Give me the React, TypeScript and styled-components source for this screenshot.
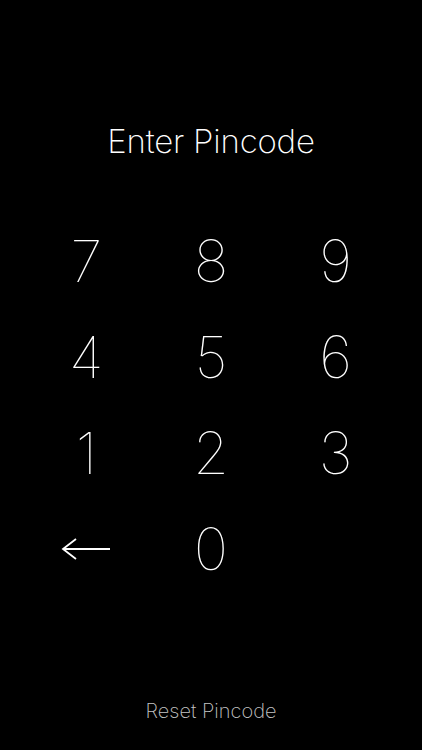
import React from 'react'
import styled, { createGlobalStyle } from 'styled-components'

const GlobalStyle = createGlobalStyle`
  html, body {
    margin: 0;
    padding: 0;
    background: #000;
  }
  body {
    font-family: Inter, "Open Sans", "Liberation Sans", sans-serif;
  }
`

const keys = ['7', '8', '9', '4', '5', '6', '1', '2', '3', 'back', '0', '']

const Screen = styled.div`
  width: 422px;
  height: 750px;
  background: #000;
  display: flex;
  flex-direction: column;
  align-items: center;
  box-sizing: border-box;
  padding-top: 117px;
`

const Title = styled.h1`
  margin: 0;
  color: #fff;
  font-size: 33px;
  font-weight: 200;
  line-height: 48px;
  letter-spacing: -0.2px;
`

const Pad = styled.div`
  margin-top: 48px;
  width: 374px;
  display: grid;
  grid-template-columns: repeat(3, 1fr);
  grid-auto-rows: 96px;
`

const Key = styled.button`
  background: none;
  border: none;
  padding: 0;
  color: #fff;
  font-family: inherit;
  font-size: 58px;
  font-weight: 100;
  display: flex;
  align-items: center;
  justify-content: center;
  cursor: pointer;
`

const Reset = styled.button`
  margin-top: auto;
  margin-bottom: 25px;
  background: none;
  border: none;
  padding: 0;
  color: #c4c4c4;
  font-family: inherit;
  font-size: 20px;
  font-weight: 200;
  line-height: 28px;
  cursor: pointer;
`

const BackArrow = () => (
  <svg width="50" height="26" viewBox="0 0 50 26" fill="none" stroke="#fff" strokeWidth="1.8">
    <path d="M49 13H2M15 3L2 13L15 23" />
  </svg>
)

export default function App() {
  return (
    <>
      <GlobalStyle />
      <Screen>
        <Title>Enter Pincode</Title>
        <Pad>
          {keys.map((k, i) => (
            <Key key={i}>{k === 'back' ? <BackArrow /> : k}</Key>
          ))}
        </Pad>
        <Reset>Reset Pincode</Reset>
      </Screen>
    </>
  )
}
